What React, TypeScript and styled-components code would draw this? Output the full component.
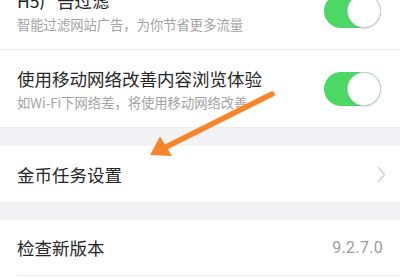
import React from "react";
import styled, { createGlobalStyle } from "styled-components";

const Global = createGlobalStyle`
  html, body { margin: 0; padding: 0; background: #ffffff; }
  body { font-family: "Noto Sans CJK SC", "Noto Sans", sans-serif; }
`;

const Screen = styled.div`
  position: relative;
  width: 400px;
  height: 278px;
  overflow: hidden;
  background: #ffffff;
`;

const Scroller = styled.div`
  display: flex;
  flex-direction: column;
  margin-top: -28px;
`;

const ToggleRow = styled.div<{ $divider?: boolean }>`
  display: flex;
  align-items: center;
  height: 77px;
  padding: 0 19px 0 17px;
  background: #fff;
  border-bottom: ${(p) => (p.$divider ? "1px solid #ededed" : "none")};
  box-sizing: content-box;
  position: relative;
`;

const TextCol = styled.div`
  flex: 1;
  display: flex;
  flex-direction: column;
  align-self: flex-start;
  padding-top: 18px;
`;

const Title = styled.div`
  font-size: 17.5px;
  line-height: 22px;
  color: #262626;
  white-space: nowrap;
`;

const Sub = styled.div`
  margin-top: 4px;
  font-size: 13.3px;
  line-height: 18px;
  color: #a3a3a3;
  white-space: nowrap;
`;

const Switch = styled.div`
  position: relative;
  width: 57px;
  height: 34px;
  border-radius: 17px;
  background: #4cd865;
  flex-shrink: 0;
`;

const Knob = styled.div`
  position: absolute;
  right: 0;
  top: 0;
  width: 34px;
  height: 34px;
  border-radius: 50%;
  background: #fff;
  box-sizing: border-box;
  border: 1px solid #c9d6cc;
  box-shadow: 0 1px 2px rgba(0, 0, 0, 0.12);
`;

const Band = styled.div<{ $h: number }>`
  height: ${(p) => p.$h}px;
  background: #f3f3f5;
  border-top: 1px solid #ececee;
  box-sizing: border-box;
`;

const Row = styled.div<{ $h: number }>`
  display: flex;
  align-items: center;
  justify-content: space-between;
  height: ${(p) => p.$h}px;
  padding: 0 14px 0 17px;
  background: #fff;
`;

const RowTitle = styled.div`
  font-size: 17.5px;
  color: #262626;
`;

const Value = styled.div`
  font-family: Roboto, "Noto Sans", sans-serif;
  font-size: 16px;
  color: #9c9c9c;
  letter-spacing: 0.3px;
  margin-right: 3px;
`;

const Divider = styled.div`
  height: 1px;
  margin-left: 17px;
  background: #ededed;
`;

const ArrowLayer = styled.svg`
  position: absolute;
  left: 0;
  top: 0;
  pointer-events: none;
`;

function Toggle() {
  return (
    <Switch>
      <Knob />
    </Switch>
  );
}

export default function App() {
  return (
    <>
      <Global />
      <Screen>
        <Scroller>
          <ToggleRow $divider>
            <TextCol>
              <Title>H5广告过滤</Title>
              <Sub>智能过滤网站广告，为你节省更多流量</Sub>
            </TextCol>
            <Toggle />
          </ToggleRow>
          <ToggleRow>
            <TextCol>
              <Title>使用移动网络改善内容浏览体验</Title>
              <Sub>如Wi-Fi下网络差，将使用移动网络改善</Sub>
            </TextCol>
            <Toggle />
          </ToggleRow>
          <Band $h={19} />
          <Row $h={56}>
            <RowTitle>金币任务设置</RowTitle>
            <svg width="9" height="17" viewBox="0 0 9 17">
              <path d="M1 1 L7.5 8.5 L1 16" fill="none" stroke="#cfcfcf" strokeWidth="1.3" />
            </svg>
          </Row>
          <Band $h={18} />
          <Row $h={55}>
            <RowTitle>检查新版本</RowTitle>
            <Value>9.2.7.0</Value>
          </Row>
          <Divider />
          <Row $h={40} />
        </Scroller>
        <ArrowLayer width="400" height="278" viewBox="0 0 400 278">
          <line x1="272" y1="94" x2="163" y2="148.5" stroke="#f6852b" strokeWidth="5.5" strokeLinecap="round" />
          <polygon points="150,155 160,136.5 172,156" fill="#f6852b" />
        </ArrowLayer>
      </Screen>
    </>
  );
}
